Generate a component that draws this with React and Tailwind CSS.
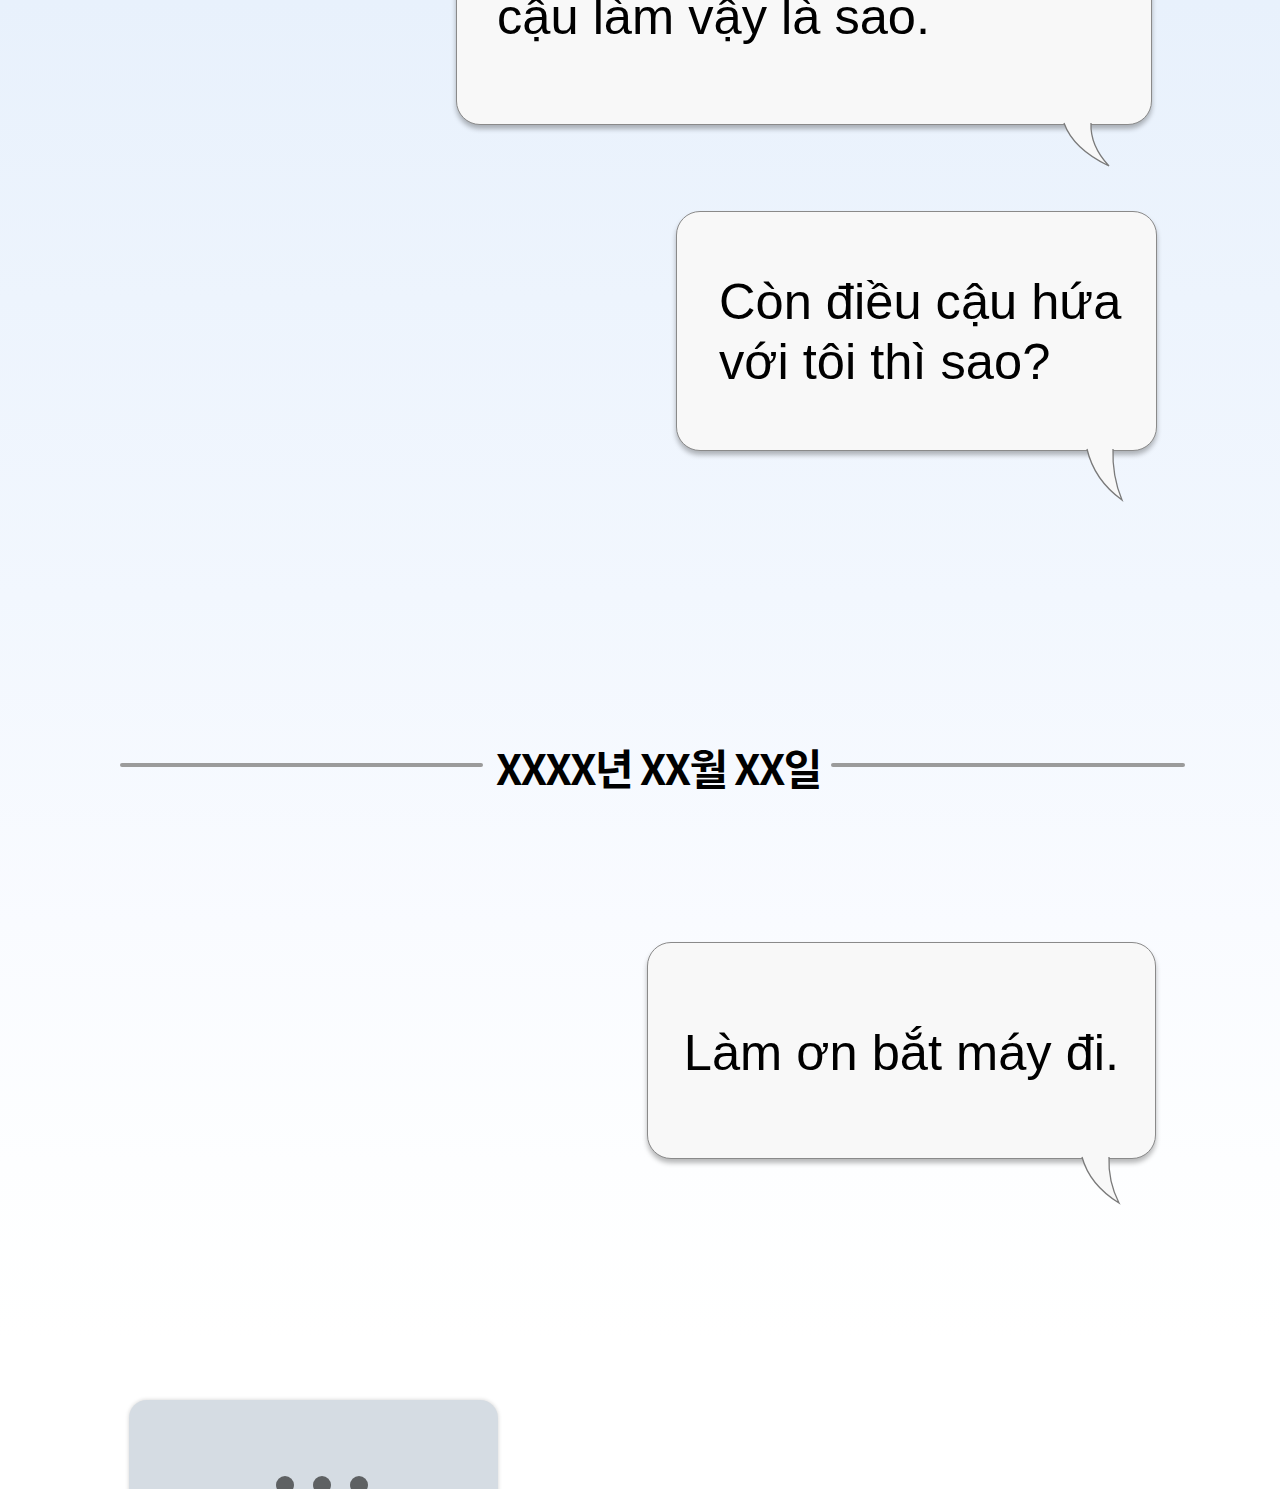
import React from "react";

function Tail({ w, h, base, className }) {
  const bl = 1;
  const br = base + 1;
  const tipX = w;
  const tipY = h + 2;
  const d = `M${bl},0 L${bl},2 Q${bl + w * 0.2},${tipY * 0.62} ${tipX},${tipY} Q${br - 1},${tipY * 0.55} ${br},2 L${br},0 Z`;
  const stroke = `M${bl},2 Q${bl + w * 0.2},${tipY * 0.62} ${tipX},${tipY} Q${br - 1},${tipY * 0.55} ${br},2`;
  return (
    <svg
      width={w + 2}
      height={h + 4}
      viewBox={`0 0 ${w + 2} ${h + 4}`}
      className={className}
    >
      <path d={d} fill="#f8f8f8" />
      <path d={stroke} fill="none" stroke="#7a7a7a" strokeWidth="1.3" />
    </svg>
  );
}

const bubble =
  "relative bg-[#f8f8f8] border-[1.5px] border-[#8a8a8a] rounded-[24px] shadow-[0_4px_5px_rgba(0,0,0,0.28)] text-black text-[50.6px] leading-[60px]";

export default function App() {
  return (
    <div
      className="w-[1280px] h-[1489px] overflow-hidden flex flex-col bg-[linear-gradient(to_bottom,#e8f1fc_0%,#f2f7fe_40%,#f9fbff_62%,#fdfeff_78%,#ffffff_90%)]"
      style={{ fontFamily: '"Liberation Sans", Arial, sans-serif' }}
    >
      {/* Bubble 1 (partially off screen) */}
      <div className={`${bubble} self-end mr-[128px] w-[696px] mt-[-34px] pt-[20px] pb-[77px] pl-[40px]`}>
        <p>cậu làm vậy là sao.</p>
        <Tail w={46} h={43} base={27} className="absolute top-full mt-[-3px] right-[40px]" />
      </div>

      {/* Bubble 2 */}
      <div className={`${bubble} self-end mr-[123px] w-[481px] mt-[86px] pt-[60px] pb-[58px] pl-[42px]`}>
        <p>
          Còn điều cậu hứa
          <br />
          với tôi thì sao?
        </p>
        <Tail w={36} h={51} base={26} className="absolute top-full mt-[-3px] right-[32px]" />
      </div>

      {/* Date divider */}
      <div className="mt-[294px] ml-[120px] mr-[95px] h-[40px] flex items-center">
        <div className="w-[363px] h-[4px] rounded-full bg-[#9b9b9b]" />
        <span
          className="ml-[13px] mr-[10px] text-[42px] leading-[40px] font-bold text-black tracking-[-1.6px] pt-[4px] whitespace-nowrap"
          style={{ fontFamily: '"Noto Sans CJK KR", "Noto Sans", sans-serif' }}
        >
          XXXX년 XX월 XX일
        </span>
        <div className="flex-1 h-[4px] rounded-full bg-[#9b9b9b]" />
      </div>

      {/* Bubble 3 */}
      <div className={`${bubble} self-end mr-[124px] w-[509px] mt-[157px] pt-[80px] pb-[75px] text-center`}>
        <p>Làm ơn bắt máy đi.</p>
        <Tail w={38} h={46} base={27} className="absolute top-full mt-[-3px] right-[34px]" />
      </div>

      {/* Typing bubble */}
      <div className="ml-[129px] mt-[241px] w-[369px] h-[160px] shrink-0 rounded-[18px] bg-[#d5dce3] shadow-[0_0_4px_rgba(0,0,0,0.18)] pt-[76px] pl-[147px] flex gap-[19px]">
        <span className="w-[18px] h-[18px] rounded-full bg-[#5e6163]" />
        <span className="w-[18px] h-[18px] rounded-full bg-[#5e6163]" />
        <span className="w-[18px] h-[18px] rounded-full bg-[#5e6163]" />
      </div>
    </div>
  );
}
